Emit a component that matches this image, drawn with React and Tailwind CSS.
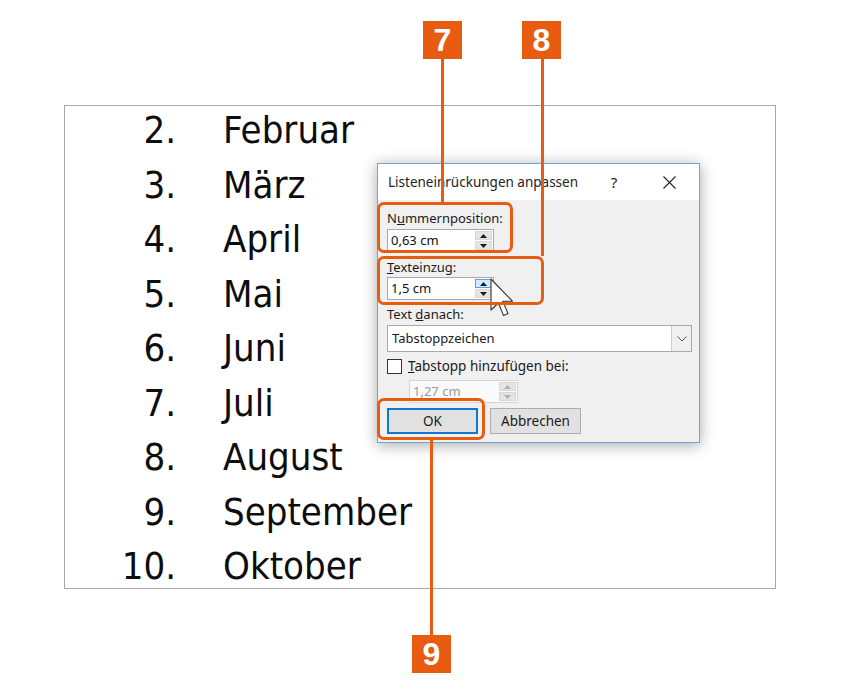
import React from 'react';

const months = [
  ['2.', 'Februar'],
  ['3.', 'März'],
  ['4.', 'April'],
  ['5.', 'Mai'],
  ['6.', 'Juni'],
  ['7.', 'Juli'],
  ['8.', 'August'],
  ['9.', 'September'],
  ['10.', 'Oktober'],
];

const ui = { fontFamily: '"Noto Sans", "Open Sans", sans-serif' };

// little up/down spinner inside the number inputs
const Spinner = ({ hover, disabled }) => {
  const fill = disabled ? '#b0b0b0' : '#1a1a1a';
  return (
    <div className="flex flex-col gap-[1px] w-[18px] h-full py-[1px] pr-[1px]">
      <div className={`flex-1 flex items-center justify-center ${hover ? 'bg-[#d4e9fb] border border-[#5aa3e0]' : 'bg-[#e4e4e4] border border-[#d8d8d8]'}`}>
        <svg width="7" height="4" viewBox="0 0 7 4"><path d="M0 4 L3.5 0 L7 4 Z" fill={fill} /></svg>
      </div>
      <div className="flex-1 flex items-center justify-center bg-[#e4e4e4] border border-[#d8d8d8]">
        <svg width="7" height="4" viewBox="0 0 7 4"><path d="M0 0 L3.5 4 L7 0 Z" fill={fill} /></svg>
      </div>
    </div>
  );
};

const NumInput = ({ value, hover, disabled, className }) => (
  <div className={`flex h-[23px] border ${disabled ? 'border-[#d4d4d4] bg-[#fafafa]' : 'border-[#a9a9a9] bg-white'} ${className}`}>
    <div className={`flex-1 flex items-center pl-[3px] text-[13px] ${disabled ? 'text-[#9a9a9a]' : 'text-[#111]'}`}>{value}</div>
    <Spinner hover={hover} disabled={disabled} />
  </div>
);

const Badge = ({ n, className }) => (
  <div
    className={`absolute w-[39px] h-[38px] bg-[#e85c12] text-white text-[32px] font-bold flex items-center justify-center ${className}`}
    style={{ fontFamily: '"Liberation Sans", Arial, sans-serif' }}
  >
    {n}
  </div>
);

export default function App() {
  return (
    <div className="relative w-[850px] h-[695px] bg-white overflow-hidden pt-[105px] pl-[64px]">
      {/* document page with the numbered list */}
      <div className="w-[712px] h-[484px] border border-[#a9a9a9]">
        <div
          className="-mt-[3px] grid grid-cols-[111px_1fr] gap-x-[47px] text-[38px] leading-[54.5px] text-[#0d0d0d]"
          style={{ fontFamily: '"DejaVu Sans Condensed", "Liberation Sans", sans-serif' }}
        >
          {months.map(([n, m]) => (
            <React.Fragment key={n}>
              <div className="text-right">{n}</div>
              <div>{m}</div>
            </React.Fragment>
          ))}
        </div>
      </div>

      {/* dialog */}
      <div
        className="absolute left-[377px] top-[163px] w-[323px] h-[280px] border border-[#6fa6d9] bg-[#f0f0f0] shadow-[0_2px_14px_rgba(0,0,0,0.35)] text-[#1a1a1a]"
        style={ui}
      >
        <div className="h-[36px] bg-white flex items-center pl-[10px] pr-[7px] gap-[9px]">
          <div className="flex-1 text-[13.5px] text-[#222]">Listeneinrückungen anpassen</div>
          <div className="w-[46px] text-center text-[15px]">?</div>
          <div className="w-[46px] flex justify-center">
            <svg width="13" height="13" viewBox="0 0 13 13">
              <path d="M0.5 0.5 L12.5 12.5 M12.5 0.5 L0.5 12.5" stroke="#222" strokeWidth="1.1" />
            </svg>
          </div>
        </div>

        <div className="pl-[9px] pt-[10px] text-[13px]">
          <div className="h-[16px] leading-[16px]">N<span className="underline">u</span>mmernposition:</div>
          <NumInput value="0,63 cm" className="mt-[3px] w-[107px]" />

          <div className="mt-[7px] h-[16px] leading-[16px]"><span className="underline">T</span>exteinzug:</div>
          <NumInput value="1,5 cm" hover className="mt-[2px] w-[107px]" />

          <div className="mt-[6px] h-[16px] leading-[16px]">Text <span className="underline">d</span>anach:</div>
          <div className="mt-[3px] w-[305px] h-[27px] flex border border-[#a9a9a9] bg-white">
            <div className="flex-1 flex items-center pl-[4px]">Tabstoppzeichen</div>
            <div className="w-[20px] flex items-center justify-center bg-[#f0f0f0] border-l border-[#cdcdcd]">
              <svg width="10" height="6" viewBox="0 0 10 6"><path d="M0.5 0.5 L5 5 L9.5 0.5" fill="none" stroke="#555" strokeWidth="1" /></svg>
            </div>
          </div>

          <div className="mt-[6px] h-[16px] flex items-center gap-[6px]">
            <div className="w-[15px] h-[15px] border border-[#333] bg-white" />
            <div className="leading-[16px] text-[13.5px]"><span className="underline">T</span>abstopp hinzufügen bei:</div>
          </div>
          <NumInput value="1,27 cm" disabled className="mt-[6px] ml-[22px] w-[109px]" />

          <div className="mt-[5px] flex gap-[12px] text-[13.5px]">
            <div className="w-[91px] h-[26px] flex items-center justify-center bg-[#e1e1e1] border-2 border-[#0a78d4]">OK</div>
            <div className="w-[91px] h-[26px] flex items-center justify-center bg-[#e1e1e1] border border-[#adadad]">Abbrechen</div>
          </div>
        </div>
      </div>

      {/* mouse pointer */}
      <svg className="absolute left-[490px] top-[278px]" width="24" height="40" viewBox="0 0 12 20">
        <path d="M0.5 0.5 L0.5 16 L4.2 12.5 L6.8 18.8 L9 17.8 L6.4 11.6 L11.2 11.6 Z" fill="white" stroke="#333" strokeWidth="0.55" strokeLinejoin="round" />
      </svg>

      {/* orange callouts */}
      <div className="absolute left-[377px] top-[202px] w-[136px] h-[51px] border-[3px] border-[#e85c12] rounded-[7px]" />
      <div className="absolute left-[377px] top-[256px] w-[167px] h-[49px] border-[3px] border-[#e85c12] rounded-[7px]" />
      <div className="absolute left-[377px] top-[398px] w-[108px] h-[42px] border-[3px] border-[#e85c12] rounded-[7px]" />

      <div className="absolute left-[441px] top-[59px] w-[3px] h-[143px] bg-[#e85c12]" />
      <div className="absolute left-[541px] top-[59px] w-[3px] h-[197px] bg-[#e85c12]" />
      <div className="absolute left-[430px] top-[440px] w-[3px] h-[195px] bg-[#e85c12]" />

      <Badge n="7" className="left-[423px] top-[21px]" />
      <Badge n="8" className="left-[522px] top-[21px]" />
      <Badge n="9" className="left-[412px] top-[635px]" />
    </div>
  );
}
